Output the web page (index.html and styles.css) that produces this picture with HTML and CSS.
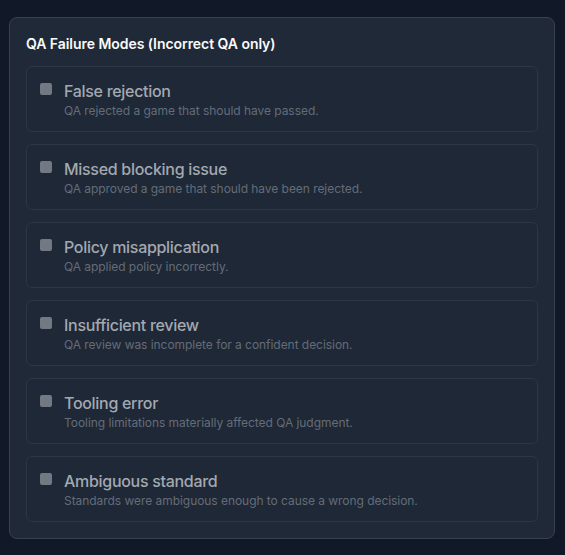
FILE: index.html
```html
<!DOCTYPE html>
<html lang="en">
<head>
    <meta charset="UTF-8">
    <meta name="viewport" content="width=device-width, initial-scale=1.0">
    <title>QA Failure Modes</title>
    <link rel="stylesheet" href="styles.css">
</head>
<body>
    <div class="panel">
        <h3 class="panel-title">QA Failure Modes (Incorrect QA only)</h3>

        <div class="mode-list">
            <label class="mode">
                <span class="check"></span>
                <span class="mode-text">
                    <span class="mode-name">False rejection</span>
                    <span class="mode-desc">QA rejected a game that should have passed.</span>
                </span>
            </label>
            <label class="mode">
                <span class="check"></span>
                <span class="mode-text">
                    <span class="mode-name">Missed blocking issue</span>
                    <span class="mode-desc">QA approved a game that should have been rejected.</span>
                </span>
            </label>
            <label class="mode">
                <span class="check"></span>
                <span class="mode-text">
                    <span class="mode-name">Policy misapplication</span>
                    <span class="mode-desc">QA applied policy incorrectly.</span>
                </span>
            </label>
            <label class="mode">
                <span class="check"></span>
                <span class="mode-text">
                    <span class="mode-name">Insufficient review</span>
                    <span class="mode-desc">QA review was incomplete for a confident decision.</span>
                </span>
            </label>
            <label class="mode">
                <span class="check"></span>
                <span class="mode-text">
                    <span class="mode-name">Tooling error</span>
                    <span class="mode-desc">Tooling limitations materially affected QA judgment.</span>
                </span>
            </label>
            <label class="mode">
                <span class="check"></span>
                <span class="mode-text">
                    <span class="mode-name">Ambiguous standard</span>
                    <span class="mode-desc">Standards were ambiguous enough to cause a wrong decision.</span>
                </span>
            </label>
        </div>
    </div>
</body>
</html>
```

FILE: styles.css
```css
body {
    font-family: 'Inter', 'Liberation Sans', sans-serif;
    margin: 0;
    padding: 17px 10px 0 9px;
    background-color: #111827;
}

.panel {
    background-color: #1f2937;
    border: 1px solid #374151;
    border-radius: 8px;
    padding: 16px;
}

.panel-title {
    margin: 0 0 12px;
    font-size: 14px;
    line-height: 20px;
    font-weight: 600;
    letter-spacing: -0.05px;
    color: #f9fafb;
}

.mode-list {
    display: flex;
    flex-direction: column;
    gap: 12px;
}

.mode {
    display: flex;
    gap: 12px;
    padding: 12px 13px;
    background-color: #1e2836;
    border: 1px solid #2c3646;
    border-radius: 6px;
}

.check {
    flex: none;
    width: 12px;
    height: 12px;
    margin-top: 4px;
    border-radius: 2px;
    background-color: #737983;
}

.mode-text {
    display: flex;
    flex-direction: column;
}

.mode-name {
    font-size: 16px;
    line-height: 24px;
    font-weight: 500;
    letter-spacing: -0.3px;
    color: #a3a8b1;
}

.mode-desc {
    font-size: 12px;
    line-height: 16px;
    letter-spacing: -0.05px;
    color: #656c78;
}
```
